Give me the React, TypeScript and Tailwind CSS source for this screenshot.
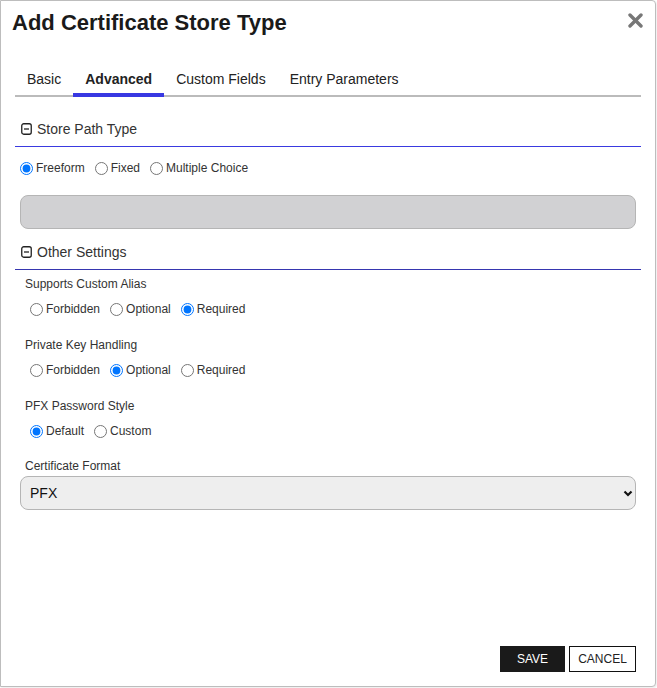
import React, { useState } from 'react';

const font = { fontFamily: '"Liberation Sans", Arial, sans-serif' };

function MinusBox() {
  return (
    <svg width="11" height="12" viewBox="0 0 11 12" className="shrink-0">
      <rect x="0.75" y="0.75" width="9.5" height="10.5" rx="2" fill="none" stroke="#222" strokeWidth="1.3" />
      <line x1="3" y1="6" x2="8" y2="6" stroke="#222" strokeWidth="1.3" />
    </svg>
  );
}

function SectionHeader({ title, line }: { title: string; line: string }) {
  return (
    <div className={`flex items-center gap-[5px] pl-[6px] pb-[7px] border-b ${line}`}>
      <MinusBox />
      <span className="text-[14px] leading-5 text-[#333]">{title}</span>
    </div>
  );
}

function RadioGroup({ name, options, value, onChange }: { name: string; options: string[]; value: string; onChange: (v: string) => void }) {
  return (
    <div className="flex items-center gap-[10px] h-5">
      {options.map((o) => (
        <label key={o} className="flex items-center gap-[3px] text-[12px] leading-4 text-[#333] cursor-pointer">
          <input
            type="radio"
            name={name}
            checked={value === o}
            onChange={() => onChange(o)}
            className="w-[13px] h-[13px] m-0"
          />
          {o}
        </label>
      ))}
    </div>
  );
}

export default function App() {
  const [tab, setTab] = useState('Advanced');
  const [pathType, setPathType] = useState('Freeform');
  const [alias, setAlias] = useState('Required');
  const [keyHandling, setKeyHandling] = useState('Optional');
  const [pfxStyle, setPfxStyle] = useState('Default');
  const [format, setFormat] = useState('PFX');

  const tabs = ['Basic', 'Advanced', 'Custom Fields', 'Entry Parameters'];

  return (
    <div className="w-[657px] h-[688px] bg-white" style={font}>
      <div className="w-[656px] h-[687px] border border-[#bdbdbd] rounded-r-[4px] bg-white flex flex-col shadow-[1px_1px_2px_rgba(0,0,0,0.08)]">
        {/* Header */}
        <div className="flex items-start justify-between pl-[11px] pr-[12px] pt-[9px]">
          <h2 className="text-[22px] leading-[26px] font-bold text-[#1a1a1a]">Add Certificate Store Type</h2>
          <button className="mt-[3px]" aria-label="Close">
            <svg width="15" height="15" viewBox="0 0 15 15">
              <line x1="2" y1="2" x2="13" y2="13" stroke="#777" strokeWidth="3.4" strokeLinecap="round" />
              <line x1="13" y1="2" x2="2" y2="13" stroke="#777" strokeWidth="3.4" strokeLinecap="round" />
            </svg>
          </button>
        </div>

        {/* Tabs */}
        <div className="mx-[14px] mt-[26px] flex border-b-2 border-[#bbb]">
          {tabs.map((t) => (
            <button
              key={t}
              onClick={() => setTab(t)}
              className={`px-3 pt-[7px] pb-[4px] -mb-[2px] text-[14px] leading-5 text-[#222] border-b-4 ${
                tab === t ? 'font-bold border-[#3838e2]' : 'border-transparent'
              }`}
            >
              {t}
            </button>
          ))}
        </div>

        {/* Store Path Type */}
        <div className="mx-[14px] mt-[22px]">
          <SectionHeader title="Store Path Type" line="border-[#3a3ae0]" />
          <div className="pl-[5px] mt-[11px]">
            <RadioGroup name="pathType" options={['Freeform', 'Fixed', 'Multiple Choice']} value={pathType} onChange={setPathType} />
          </div>
          <div className="ml-[5px] mr-[5px] mt-[17px] h-[34px] rounded-[8px] border border-[#b5b5b5] bg-[#d1d1d3]" />
        </div>

        {/* Other Settings */}
        <div className="mx-[14px] mt-[13px]">
          <SectionHeader title="Other Settings" line="border-[#3636b0]" />
          <div className="pl-[10px] mt-[6px]">
            <div className="text-[12px] leading-4 text-[#333]">Supports Custom Alias</div>
            <div className="pl-[5px] mt-[7px]">
              <RadioGroup name="alias" options={['Forbidden', 'Optional', 'Required']} value={alias} onChange={setAlias} />
            </div>

            <div className="mt-[18px] text-[12px] leading-4 text-[#333]">Private Key Handling</div>
            <div className="pl-[5px] mt-[7px]">
              <RadioGroup name="keyHandling" options={['Forbidden', 'Optional', 'Required']} value={keyHandling} onChange={setKeyHandling} />
            </div>

            <div className="mt-[18px] text-[12px] leading-4 text-[#333]">PFX Password Style</div>
            <div className="pl-[5px] mt-[7px]">
              <RadioGroup name="pfxStyle" options={['Default', 'Custom']} value={pfxStyle} onChange={setPfxStyle} />
            </div>

            <div className="mt-[17px] text-[12px] leading-4 text-[#333]">Certificate Format</div>
          </div>
          <div className="relative ml-[5px] mr-[5px] mt-[2px]">
            <select
              value={format}
              onChange={(e) => setFormat(e.target.value)}
              className="appearance-none w-full h-[34px] rounded-[8px] border border-[#b5b5b5] bg-[#eeeeee] pl-[9px] text-[14px] text-[#111]"
            >
              <option>PFX</option>
              <option>PEM</option>
              <option>DER</option>
            </select>
            <svg width="10" height="8" viewBox="0 0 10 8" className="absolute right-[3px] top-[14px] pointer-events-none">
              <polyline points="1.5,1.5 5,5 8.5,1.5" fill="none" stroke="#111" strokeWidth="2.2" />
            </svg>
          </div>
        </div>

        {/* Footer */}
        <div className="mt-auto flex justify-end gap-1 pr-[19px] pb-[14px]">
          <button className="w-[65px] h-[26px] bg-[#1a1a1a] text-white text-[12px] leading-4">SAVE</button>
          <button className="w-[67px] h-[26px] border border-[#111] bg-white text-[#222] text-[12px] leading-4">CANCEL</button>
        </div>
      </div>
    </div>
  );
}
